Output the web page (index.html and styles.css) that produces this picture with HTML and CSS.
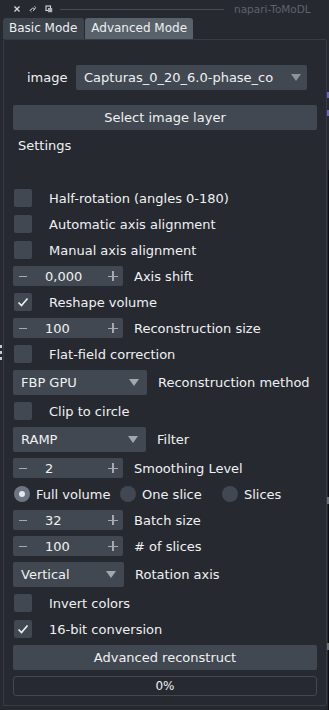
FILE: index.html
```html
<!DOCTYPE html>
<html>
<head>
<meta charset="utf-8">
<link rel="stylesheet" href="styles.css">
</head>
<body>
<div class="window">
  <div class="titlebar">
    <div class="tb-icons">
      <svg class="tb-icon" viewBox="0 0 8 8"><path d="M1.5 1.5 L6.5 6.5 M6.5 1.5 L1.5 6.5" stroke="#d8d9db" stroke-width="1.3" fill="none"/></svg>
      <svg class="tb-icon" viewBox="0 0 8 8"><path d="M1 5.5 L3 3.5 M4 6 L6.5 3.5 M2.5 6.8 L1.2 5.5 L4 2.7 L5.3 4 M5.5 1.2 L6.8 2.5 L4.2 5.1" stroke="#b8babd" stroke-width="1" fill="none"/></svg>
      <svg class="tb-icon" viewBox="0 0 8 8"><rect x="1" y="1" width="4.5" height="4.5" fill="none" stroke="#d8d9db" stroke-width="1.1"/><rect x="3" y="3" width="4.2" height="4.2" fill="#b0b3b7"/></svg>
    </div>
    <div class="tb-line"></div>
    <div class="tb-title">napari-ToMoDL</div>
  </div>
  <div class="tabs">
    <div class="tab">Basic Mode</div>
    <div class="tab active">Advanced Mode</div>
  </div>
  <div class="panel">
    <div class="row image-row">
      <span class="image-label">image</span>
      <div class="combo combo-image"><span>Capturas_0_20_6.0-phase_co</span><i class="arrow"></i></div>
    </div>
    <div class="button select-btn">Select image layer</div>
    <div class="settings-title">Settings</div>
    <div class="group">
      <div class="row"><span class="check"></span><span class="lbl-check">Half-rotation (angles 0-180)</span></div>
      <div class="row"><span class="check"></span><span class="lbl-check">Automatic axis alignment</span></div>
      <div class="row"><span class="check"></span><span class="lbl-check">Manual axis alignment</span></div>
      <div class="row"><div class="spin"><span class="minus"></span><span class="val">0,000</span><span class="plus"></span></div><span class="lbl">Axis shift</span></div>
      <div class="row"><span class="check on"><svg viewBox="0 0 18 18"><path d="M4.5 9.5 L7.5 12.5 L13.5 5.5" stroke="#f0f1f2" stroke-width="1.6" fill="none"/></svg></span><span class="lbl-check">Reshape volume</span></div>
      <div class="row"><div class="spin"><span class="minus"></span><span class="val">100</span><span class="plus"></span></div><span class="lbl">Reconstruction size</span></div>
      <div class="row"><span class="check"></span><span class="lbl-check">Flat-field correction</span></div>
      <div class="row crow"><div class="combo combo-fbp"><span>FBP GPU</span><i class="arrow"></i></div><span class="lbl">Reconstruction method</span></div>
      <div class="row"><span class="check"></span><span class="lbl-check">Clip to circle</span></div>
      <div class="row crow"><div class="combo combo-ramp"><span>RAMP</span><i class="arrow"></i></div><span class="lbl">Filter</span></div>
      <div class="row"><div class="spin"><span class="minus"></span><span class="val">2</span><span class="plus"></span></div><span class="lbl">Smoothing Level</span></div>
      <div class="row rrow">
        <div class="radio-item r1"><span class="radio on"></span><span>Full volume</span></div>
        <div class="radio-item r2"><span class="radio"></span><span>One slice</span></div>
        <div class="radio-item"><span class="radio"></span><span>Slices</span></div>
      </div>
      <div class="row"><div class="spin"><span class="minus"></span><span class="val">32</span><span class="plus"></span></div><span class="lbl">Batch size</span></div>
      <div class="row"><div class="spin"><span class="minus"></span><span class="val">100</span><span class="plus"></span></div><span class="lbl"># of slices</span></div>
      <div class="row crow"><div class="combo combo-vert"><span>Vertical</span><i class="arrow"></i></div><span class="lbl">Rotation axis</span></div>
      <div class="row"><span class="check"></span><span class="lbl-check">Invert colors</span></div>
      <div class="row"><span class="check on"><svg viewBox="0 0 18 18"><path d="M4.5 9.5 L7.5 12.5 L13.5 5.5" stroke="#f0f1f2" stroke-width="1.6" fill="none"/></svg></span><span class="lbl-check">16-bit conversion</span></div>
      <div class="button adv-btn">Advanced reconstruct</div>
      <div class="progress">0%</div>
    </div>
  </div>
  <div class="grip"><i></i><i></i><i></i></div>
  <div class="edge-marks"><i class="strip"></i><i class="m1"></i><i class="m2"></i><i class="g1"></i><i class="g2"></i></div>
</div>
</body>
</html>
```
FILE: styles.css
```css
* { box-sizing: border-box; }
html, body { margin: 0; padding: 0; }
body {
  background: #262930;
  font-family: "DejaVu Sans", sans-serif;
  font-size: 13px;
  color: #f0f1f2;
  width: 329px;
  height: 710px;
  overflow: hidden;
}
.window {
  position: relative;
  width: 329px;
  height: 710px;
  background: #262930;
}
.titlebar {
  height: 18px;
  display: flex;
  align-items: center;
  padding-left: 13px;
}
.tb-icons { display: flex; gap: 8px; align-items: center; }
.tb-icon { width: 8px; height: 8px; display: block; }
.tb-line {
  height: 1px;
  width: 164px;
  background: #464b54;
  margin-left: 7px;
}
.tb-title {
  margin-left: 10px;
  font-size: 10.5px;
  color: #5d636d;
  line-height: 18px;
}
.tabs {
  display: flex;
  height: 21px;
  padding-left: 3px;
  gap: 1px;
}
.tab {
  height: 21px;
  padding: 0 7px 0 6px;
  font-size: 12px;
  line-height: 20px;
  background: #3d434b;
  border-radius: 3px 3px 0 0;
  color: #eef0f1;
}
.tab.active { background: #59616b; padding: 0 6px; }
.panel {
  margin-left: 3px;
  width: 324px;
  height: 667px;
  border: 1px solid #373b43;
  border-radius: 2px;
  padding: 25px 9px 0 9px;
  display: flex;
  flex-direction: column;
}
.row {
  display: flex;
  align-items: center;
  height: 20px;
}
.image-row { height: 25px; }
.image-label { width: 63px; padding-left: 14px; }
.combo {
  background: #414851;
  border-radius: 2px;
  height: 25px;
  display: flex;
  align-items: center;
  padding-left: 8px;
  position: relative;
  flex: none;
}
.combo-image { width: 231px; }
.combo-fbp { width: 134px; }
.combo-ramp { width: 133px; }
.combo-vert { width: 111px; }
.arrow {
  position: absolute;
  right: 8px;
  top: 8.5px;
  width: 0; height: 0;
  border-left: 5.5px solid transparent;
  border-right: 5.5px solid transparent;
  border-top: 7px solid #a4a8ae;
}
.combo-image .arrow { right: 6px; border-top-color: #8e939a; }
.button {
  background: #414851;
  border-radius: 2px;
  height: 25px;
  display: flex;
  align-items: center;
  justify-content: center;
}
.select-btn { margin-top: 15px; }
.settings-title { height: 20px; line-height: 20px; margin-top: 6px; padding-left: 5px; }
.group {
  margin-top: 32px;
  display: flex;
  flex-direction: column;
  gap: 6px;
}
.crow { height: 25px; }
.rrow { height: 20px; }
.check {
  width: 18px; height: 18px;
  margin-left: 1px;
  background: #414851;
  border-radius: 2px;
  flex: none;
}
.check svg { width: 18px; height: 18px; display: block; }
.lbl-check { margin-left: 17px; }
.lbl { margin-left: 11px; }
.spin {
  width: 110px;
  height: 20px;
  background: #414851;
  border-radius: 2px;
  display: flex;
  align-items: center;
  position: relative;
  flex: none;
}
.minus {
  position: absolute;
  left: 6px; top: 9.5px;
  width: 8px; height: 1.3px;
  background: #a6aab0;
}
.plus {
  position: absolute;
  left: 95px; top: 5px;
  width: 10px; height: 10px;
}
.plus::before, .plus::after {
  content: "";
  position: absolute;
  background: #a6aab0;
}
.plus::before { left: 0; top: 4.5px; width: 10px; height: 1.3px; }
.plus::after { left: 4.4px; top: 0; width: 1.3px; height: 10px; }
.val { margin-left: 32px; }
.radio-item { display: flex; align-items: center; }
.radio {
  width: 16px; height: 16px;
  border-radius: 50%;
  background: #414851;
  margin-left: 1px;
  margin-right: 6px;
  flex: none;
  position: relative;
}
.radio.on { background: #6d7580; }
.radio.on::after {
  content: "";
  position: absolute;
  left: 5px; top: 5px;
  width: 6px; height: 6px;
  border-radius: 50%;
  background: #e6e7e9;
}
.r1 { width: 106px; }
.r2 { width: 102px; }
.adv-btn { height: 25px; }
.progress {
  height: 20px;
  border: 1px solid #414851;
  border-radius: 3px;
  display: flex;
  align-items: center;
  justify-content: center;
  font-size: 12px;
}
.grip {
  position: absolute;
  left: 0; top: 345px;
  display: flex; flex-direction: column; gap: 3px;
}
.grip i { display: block; width: 2px; height: 3px; background: #c9cbce; }
.edge-marks i { position: absolute; display: block; right: 0; width: 2px; }
.edge-marks .strip { top: 170px; height: 540px; width: 1px; background: #0c0d0f; }
.edge-marks .m1 { top: 92px; height: 6px; background: #6e64b8; }
.edge-marks .m2 { top: 110px; height: 6px; background: #6e64b8; }
.edge-marks .g1 { top: 497px; height: 7px; background: #6a6e75; }
.edge-marks .g2 { top: 643px; height: 7px; background: #6a6e75; }
```
